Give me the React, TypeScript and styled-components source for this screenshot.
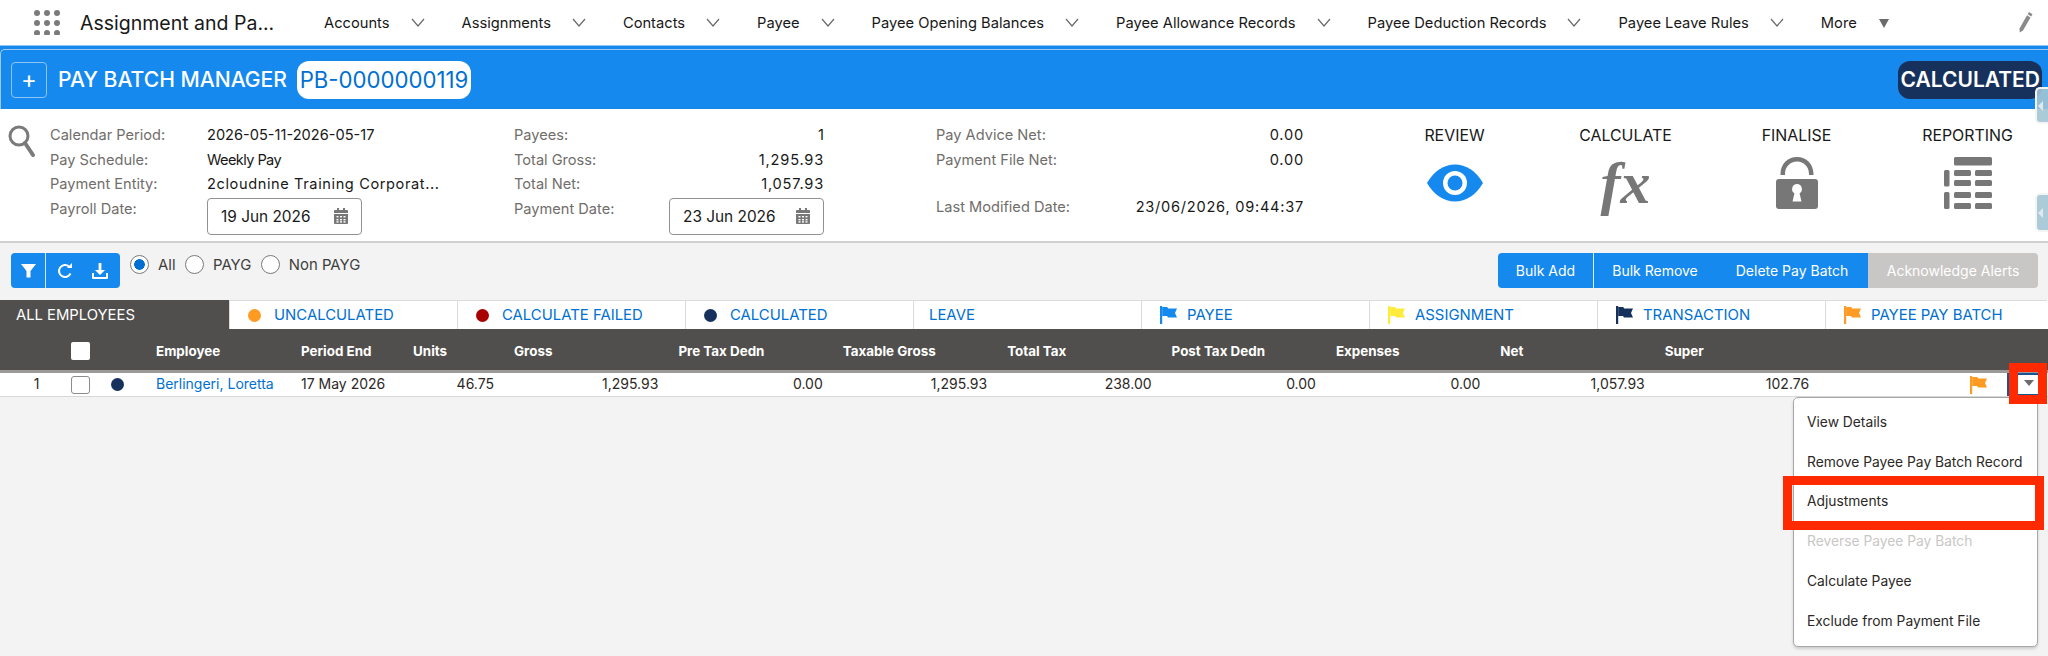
import React from "react";
import styled, { createGlobalStyle } from "styled-components";

const Global = createGlobalStyle`
  html, body { margin: 0; padding: 0; background: #f3f3f3; overflow: hidden; }
  body { font-family: Inter, "Liberation Sans", sans-serif; width: 2048px; height: 656px; position: relative; -webkit-font-smoothing: antialiased; }
  * { box-sizing: border-box; }
`;

const Page = styled.div`
  width: 2048px;
  height: 656px;
  position: relative;
  overflow: hidden;
  background: #f3f3f3;
`;

const TopBar = styled.header`
  height: 45px;
  background: #fff;
  display: flex;
  align-items: center;
  padding-left: 34px;
`;
const AppTitle = styled.div`
  margin-left: 20px;
  width: 244px;
  font-size: 19.5px;
  color: #181818;
`;
const NavList = styled.nav`
  display: flex;
  align-items: center;
  flex: 1;
  color: #181818;
  font-size: 14.7px;
`;
const NavItem = styled.div`
  display: flex;
  align-items: center;
  gap: 21px;
  margin-right: 37px;
  white-space: nowrap;
`;
const MoreCaret = styled.svg`
  width: 12px;
  height: 12px;
`;
const PencilWrap = styled.div`
  margin-left: auto;
  margin-right: 15px;
  display: flex;
`;

const BatchHeader = styled.div`
  height: 64px;
  padding-top: 3px;
  border-top: 1px solid #8fc5f5;
  background: #1589ee;
`;
const BatchInner = styled.div`
  height: 60px;
  border-top: 1px solid #9ccaf3;
  border-left: 1px solid #9ccaf3;
  border-top-left-radius: 5px;
  display: flex;
  align-items: center;
  padding: 0 6px 0 10px;
  color: #fff;
`;
const PlusButton = styled.div`
  width: 36px;
  height: 36px;
  border: 1px solid #8fc5f5;
  border-radius: 4px;
  display: flex;
  align-items: center;
  justify-content: center;
  font-size: 24px;
  line-height: 1;
`;
const BatchTitle = styled.div`
  margin-left: 11px;
  font-size: 21.1px;
  font-weight: 500;
  white-space: nowrap;
`;
const BatchId = styled.div`
  margin-left: 10px;
  width: 174px;
  height: 38px;
  border-radius: 12px;
  background: #fff;
  color: #0070d2;
  font-size: 22.2px;
  font-weight: 400;
  display: flex;
  align-items: center;
  justify-content: center;
  white-space: nowrap;
`;
const StatusPill = styled.div`
  margin-left: auto;
  width: 144px;
  height: 38px;
  border-radius: 12px;
  background: #16325c;
  font-size: 21px;
  font-weight: 600;
  display: flex;
  align-items: center;
  justify-content: flex-end;
  padding-right: 2px;
  white-space: nowrap;
`;

const Summary = styled.section`
  height: 134px;
  background: #fff;
  border-bottom: 2px solid #d0d0d0;
  display: flex;
  position: relative;
  padding-top: 1px;
`;
const SearchBox = styled.div`
  width: 50px;
  padding: 14px 0 0 7px;
`;
const SummaryCol = styled.div<{ $w: number; $label: number; $gap?: number }>`
  width: ${(p) => p.$w}px;
  margin-left: ${(p) => p.$gap ?? 0}px;
  padding-top: 16px;
  display: grid;
  grid-template-columns: ${(p) => p.$label}px 1fr;
  grid-auto-rows: 24.6px;
  align-content: start;
  font-size: 14.6px;
`;
const Label = styled.div<{ $nudge?: number }>`
  color: #706e6b;
  white-space: nowrap;
  margin-top: ${(p) => p.$nudge ?? 0}px;
`;
const Value = styled.div<{ $right?: boolean; $ls?: number; $nudge?: number }>`
  color: #181818;
  white-space: nowrap;
  text-align: ${(p) => (p.$right ? "right" : "left")};
  letter-spacing: ${(p) => p.$ls ?? 0}px;
  margin-top: ${(p) => p.$nudge ?? 0}px;
`;
const DateField = styled.div<{ $end?: boolean }>`
  margin-top: -2px;
  width: 155px;
  height: 37px;
  border: 1px solid #919191;
  border-radius: 4px;
  background: #fff;
  display: flex;
  align-items: center;
  justify-content: space-between;
  padding: 0 13px;
  color: #181818;
  font-size: 15.4px;
  justify-self: ${(p) => (p.$end ? "end" : "start")};
`;
const Actions = styled.div`
  position: absolute;
  top: 1px;
  left: 1369px;
  display: grid;
  grid-template-columns: repeat(4, 171px);
  padding-top: 17px;
`;
const ActionCell = styled.div`
  display: flex;
  flex-direction: column;
  align-items: center;
  gap: 12px;
  font-size: 15.9px;
  line-height: 17px;
  color: #181818;
`;
const ActionIcon = styled.div`
  height: 54px;
  display: flex;
  align-items: center;
  justify-content: center;
`;
const FxGlyph = styled.span`
  font-family: "Liberation Serif", serif;
  font-style: italic;
  font-weight: 700;
  font-size: 60px;
  line-height: 54px;
  color: #777;
`;
const EdgeTab = styled.div<{ $top: number; $h: number }>`
  position: absolute;
  right: 0;
  top: ${(p) => p.$top}px;
  width: 13px;
  height: ${(p) => p.$h}px;
  border-radius: 5px 0 0 5px;
  background: rgba(163, 196, 212, 0.9);
  border: 2px solid #f4f4f4;
  border-right: none;
  display: flex;
  align-items: center;
  &::before {
    content: "";
    border-style: solid;
    border-width: 5px 5px 5px 0;
    border-color: transparent #dfeaf0 transparent transparent;
    margin-left: 1px;
  }
`;

const Toolbar = styled.div`
  height: 57px;
  padding: 10px 10px 0 11px;
  display: flex;
  align-items: flex-start;
`;
const IconGroup = styled.div`
  width: 109px;
  height: 35px;
  border-radius: 4px;
  background: #1589ee;
  display: flex;
  align-items: center;
`;
const FilterCell = styled.div`
  width: 35px;
  height: 35px;
  border-right: 1px solid #cfe6fb;
  display: flex;
  align-items: center;
  justify-content: center;
`;
const GroupIcons = styled.div`
  flex: 1;
  display: flex;
  justify-content: space-around;
  padding: 0 3px;
`;
const RadioRow = styled.div`
  margin-left: 10px;
  margin-top: 2px;
  display: flex;
  align-items: center;
  height: 19px;
  font-size: 14.9px;
  color: #3e3e3c;
`;
const Radio = styled.span<{ $on?: boolean }>`
  width: 19px;
  height: 19px;
  border-radius: 50%;
  border: 1px solid #7a7a7a;
  background: ${(p) => (p.$on ? "radial-gradient(circle, #0070d2 0 5px, #fff 5.6px)" : "#fff")};
  margin-right: 9px;
`;
const RadioText = styled.span`
  margin-right: 9.5px;
`;
const BulkGroup = styled.div`
  margin-left: auto;
  height: 35px;
  display: flex;
  border-radius: 4px;
  overflow: hidden;
  font-size: 14px;
  color: #fff;
`;
const BulkButton = styled.div<{ $w: number; $off?: boolean; $line?: boolean }>`
  width: ${(p) => p.$w}px;
  background: ${(p) => (p.$off ? "#c9c7c5" : "#1589ee")};
  border-right: ${(p) => (p.$line ? "1px solid #d8edff" : "none")};
  display: flex;
  align-items: center;
  justify-content: center;
  white-space: nowrap;
`;

const Tabs = styled.div`
  height: 29px;
  display: flex;
  background: #fff;
`;
const TabAll = styled.div`
  width: 229px;
  background: #514f4d;
  color: #fff;
  display: flex;
  align-items: center;
  padding-left: 16px;
  font-size: 14.8px;
`;
const Tab = styled.div<{ $w?: number; $pad?: number; $gap?: number }>`
  width: ${(p) => p.$w ?? 228}px;
  border-left: 1px solid #dddbda;
  border-top: 1px solid #dddbda;
  display: flex;
  align-items: center;
  padding-left: ${(p) => p.$pad ?? 18}px;
  gap: ${(p) => p.$gap ?? 13}px;
  color: #0070d2;
  font-size: 14.9px;
  white-space: nowrap;
`;
const Dot = styled.span<{ $c: string }>`
  width: 13px;
  height: 13px;
  border-radius: 50%;
  background: ${(p) => p.$c};
  flex: none;
`;

const COLS = "60px 44px 52px 145px 112px 81px repeat(8, 164.4px) 1fr";
const HeadRow = styled.div`
  height: 44px;
  padding-top: 2px;
  background: #514f4d;
  border-bottom: 3px solid #9b9a98;
  display: grid;
  grid-template-columns: ${COLS};
  align-items: center;
  color: #fff;
  font-size: 13.4px;
  font-weight: 700;
`;
const HeadCell = styled.div<{ $pad?: boolean }>`
  padding-left: ${(p) => (p.$pad ? 20 : 0)}px;
  white-space: nowrap;
`;
const HeadCheck = styled.span`
  display: block;
  margin-left: 11px;
  width: 19px;
  height: 18px;
  background: #fff;
  border-radius: 2px;
`;
const DataRow = styled.div`
  height: 24px;
  background: #fff;
  border-bottom: 1px solid #d8d8d8;
  display: grid;
  grid-template-columns: ${COLS};
  align-items: center;
  color: #2b2826;
  font-size: 14px;
`;
const NumCell = styled.div`
  text-align: center;
  padding-left: 13px;
  margin-top: -2px;
`;
const RowCheck = styled.span`
  display: block;
  margin-left: 11px;
  width: 19px;
  height: 18px;
  background: #fff;
  border: 1px solid #8c8c8c;
  border-radius: 3px;
`;
const StatusDotCell = styled.div`
  display: flex;
  padding-left: 7px;
`;
const NameLink = styled.div`
  color: #0070d2;
  white-space: nowrap;
  margin-top: -2px;
`;
const Cell = styled.div<{ $right?: boolean }>`
  text-align: ${(p) => (p.$right ? "right" : "left")};
  white-space: nowrap;
  margin-top: -2px;
`;
const RowEnd = styled.div`
  display: flex;
  align-items: center;
  height: 23px;
  padding-left: 161px;
`;
const ActionToggle = styled.div`
  margin-left: 20px;
  width: 33px;
  height: 23px;
  border: 2px solid #1b5297;
  background: #fff;
`;

const Highlight = styled.div<{ $l: number; $t: number; $w: number; $h: number }>`
  position: absolute;
  left: ${(p) => p.$l}px;
  top: ${(p) => p.$t}px;
  width: ${(p) => p.$w}px;
  height: ${(p) => p.$h}px;
  border: 9px solid #ff2a00;
  z-index: 5;
`;
const ToggleCaret = styled.svg`
  position: absolute;
  left: 2024px;
  top: 380px;
  width: 10px;
  height: 6px;
  z-index: 6;
`;
const Menu = styled.div`
  position: absolute;
  left: 1793px;
  top: 397px;
  width: 245px;
  height: 250px;
  background: #fff;
  border: 1px solid #a8a8a8;
  border-radius: 5px;
  box-shadow: 0 2px 3px rgba(0, 0, 0, 0.16);
  padding: 4px 0 0 13px;
  z-index: 4;
  display: flex;
  flex-direction: column;
`;
const MenuItem = styled.div<{ $off?: boolean }>`
  height: 39.8px;
  display: flex;
  align-items: center;
  font-size: 13.8px;
  white-space: nowrap;
  color: ${(p) => (p.$off ? "#c9c7c5" : "#2b2826")};
`;

const Grid = () => (
  <svg width="26" height="25" viewBox="0 0 26 25" fill="#7b7b7b">
    {[3, 13, 23].flatMap((y) => [3, 13, 23].map((x) => <circle key={`${x}-${y}`} cx={x} cy={y} r="3" />))}
  </svg>
);
const Chevron = () => (
  <svg width="14" height="9" viewBox="0 0 14 9" fill="none" stroke="#6b6b6b" strokeWidth="1.2">
    <path d="M1 1l6 7 6-7" />
  </svg>
);
const Pencil = () => (
  <svg width="15" height="23" viewBox="0 0 15 23" fill="#8a8a8a">
    <path d="M11 1l3.500 2.200-1.300 2.200-3.500-2.200zM9 4.200l3.500 2.200L5 19.600 1.700 21.600 1.500 17.400z" />
  </svg>
);
const SearchIcon = () => (
  <svg width="30" height="34" viewBox="0 0 30 34" fill="none" stroke="#7a7a7a">
    <circle cx="12" cy="12" r="9" strokeWidth="3" />
    <path d="M18 19l8 12" strokeWidth="4" strokeLinecap="round" />
  </svg>
);
const CalendarIcon = () => (
  <svg width="14" height="16" viewBox="0 0 14 16" fill="#777">
    <rect x="3" y="0" width="2" height="3" />
    <rect x="9" y="0" width="2" height="3" />
    <path d="M1 2h12a1 1 0 0 1 1 1v2H0V3a1 1 0 0 1 1-1z" />
    <path d="M0 6h14v9a1 1 0 0 1-1 1H1a1 1 0 0 1-1-1z" />
    <g fill="#fff">
      {[8, 11, 13.2].flatMap((y) => [2.5, 6, 9.5].map((x) => <rect key={`${x}-${y}`} x={x} y={y} width="2" height="1.4" />))}
    </g>
  </svg>
);
const EyeIcon = () => (
  <svg width="56" height="38" viewBox="0 0 56 38">
    <path d="M0 19C7 7 17 0.500 28 0.500S49 7 56 19C49 31 39 37.500 28 37.500S7 31 0 19z" fill="#1589ee" />
    <circle cx="28" cy="19" r="12" fill="#fff" />
    <circle cx="28" cy="19" r="7.500" fill="#1589ee" />
  </svg>
);
const LockIcon = () => (
  <svg width="42" height="52" viewBox="0 0 42 52" fill="#777">
    <path d="M4.500 18V17C4.500 7 11.500 0 21 0s16.500 7 16.500 17v1h-4.500v-1C33 10 28 4.500 21 4.500S9 10 9 17v1z" />
    <rect x="0" y="22" width="42" height="30" rx="3" />
    <path d="M21 27a5 5 0 0 1 2.600 9.200l1.800 8.300h-8.800l1.800-8.300A5 5 0 0 1 21 27z" fill="#fff" />
  </svg>
);
const ReportIcon = () => (
  <svg width="48" height="52" viewBox="0 0 48 52" fill="#777">
    <rect x="10" y="0" width="38" height="8.500" rx="1.500" />
    <rect x="0" y="13" width="5.500" height="16.500" rx="1.500" />
    <rect x="0" y="35" width="5.500" height="17" rx="1.500" />
    {[13, 23, 35, 46].flatMap((y) => [10, 31].map((x) => <rect key={`${x}-${y}`} x={x} y={y} width={17} height="6" rx="1.500" />))}
  </svg>
);
const FunnelIcon = () => (
  <svg width="17" height="17" viewBox="0 0 17 17" fill="#fff">
    <path d="M1 2h15l-5.500 7v6.500h-4V9z" />
  </svg>
);
const RedoIcon = () => (
  <svg width="17" height="17" viewBox="0 0 17 17" fill="none" stroke="#fff" strokeWidth="2">
    <path d="M13.500 11.500A6 6 0 1 1 12 4.500" />
    <path d="M10 6h5V1z" fill="#fff" stroke="none" />
  </svg>
);
const DownloadIcon = () => (
  <svg width="18" height="18" viewBox="0 0 18 18" fill="#fff">
    <path d="M7.600 1h2.800v7H14l-5 5-5-5h3.600z" />
    <path d="M1 11h2v4h12v-4h2v5a1 1 0 0 1-1 1H2a1 1 0 0 1-1-1z" />
  </svg>
);
const Flag = ({ c }: { c: string }) => (
  <svg width="17" height="18" viewBox="0 0 17 18">
    <rect x="0" y="0" width="2.200" height="18" fill={c} />
    <path d="M2.200 1h5l1 1.500H17l-2 4.500 2 4.500H8l-1-1.500H2.200z" fill={c} />
  </svg>
);

const rowValues = ["1,295.93", "0.00", "1,295.93", "238.00", "0.00", "0.00", "1,057.93", "102.76"];

export default function App() {
  return (
    <Page>
      <Global />
      <TopBar>
        <Grid />
        <AppTitle>Assignment and Pa...</AppTitle>
        <NavList>
          {["Accounts", "Assignments", "Contacts", "Payee", "Payee Opening Balances", "Payee Allowance Records", "Payee Deduction Records", "Payee Leave Rules"].map((n) => (
            <NavItem key={n}>
              {n}
              <Chevron />
            </NavItem>
          ))}
          <NavItem>
            More
            <MoreCaret viewBox="0 0 12 12" fill="#6b6b6b">
              <path d="M1 2h10L6 11z" />
            </MoreCaret>
          </NavItem>
          <PencilWrap>
            <Pencil />
          </PencilWrap>
        </NavList>
      </TopBar>

      <BatchHeader>
        <BatchInner>
          <PlusButton>+</PlusButton>
          <BatchTitle>PAY BATCH MANAGER</BatchTitle>
          <BatchId>PB-0000000119</BatchId>
          <StatusPill>CALCULATED</StatusPill>
        </BatchInner>
      </BatchHeader>

      <Summary>
        <SearchBox>
          <SearchIcon />
        </SearchBox>
        <SummaryCol $w={464} $label={157}>
          <Label>Calendar Period:</Label>
          <Value>2026-05-11-2026-05-17</Value>
          <Label>Pay Schedule:</Label>
          <Value $ls={-0.6}>Weekly Pay</Value>
          <Label>Payment Entity:</Label>
          <Value $ls={0.6}>2cloudnine Training Corporat...</Value>
          <Label>Payroll Date:</Label>
          <DateField>
            19 Jun 2026
            <CalendarIcon />
          </DateField>
        </SummaryCol>
        <SummaryCol $w={309} $label={155}>
          <Label>Payees:</Label>
          <Value $right>1</Value>
          <Label>Total Gross:</Label>
          <Value $right $ls={0.8}>1,295.93</Value>
          <Label>Total Net:</Label>
          <Value $right $ls={0.8}>1,057.93</Value>
          <Label>Payment Date:</Label>
          <DateField $end>
            23 Jun 2026
            <CalendarIcon />
          </DateField>
        </SummaryCol>
        <SummaryCol $w={368} $label={180} $gap={113}>
          <Label>Pay Advice Net:</Label>
          <Value $right $ls={0.8}>0.00</Value>
          <Label>Payment File Net:</Label>
          <Value $right $ls={0.8}>0.00</Value>
          <Label />
          <Value />
          <Label $nudge={-2}>Last Modified Date:</Label>
          <Value $right $ls={0.75} $nudge={-2}>23/06/2026, 09:44:37</Value>
        </SummaryCol>
        <Actions>
          <ActionCell>
            REVIEW
            <ActionIcon>
              <EyeIcon />
            </ActionIcon>
          </ActionCell>
          <ActionCell>
            CALCULATE
            <ActionIcon>
              <FxGlyph>fx</FxGlyph>
            </ActionIcon>
          </ActionCell>
          <ActionCell>
            FINALISE
            <ActionIcon>
              <LockIcon />
            </ActionIcon>
          </ActionCell>
          <ActionCell>
            REPORTING
            <ActionIcon>
              <ReportIcon />
            </ActionIcon>
          </ActionCell>
        </Actions>
        <EdgeTab $top={-22} $h={37} />
        <EdgeTab $top={84} $h={39} />
      </Summary>

      <Toolbar>
        <IconGroup>
          <FilterCell>
            <FunnelIcon />
          </FilterCell>
          <GroupIcons>
            <RedoIcon />
            <DownloadIcon />
          </GroupIcons>
        </IconGroup>
        <RadioRow>
          <Radio $on />
          <RadioText>All</RadioText>
          <Radio />
          <RadioText>PAYG</RadioText>
          <Radio />
          <RadioText>Non PAYG</RadioText>
        </RadioRow>
        <BulkGroup>
          <BulkButton $w={96} $line>Bulk Add</BulkButton>
          <BulkButton $w={122}>Bulk Remove</BulkButton>
          <BulkButton $w={152}>Delete Pay Batch</BulkButton>
          <BulkButton $w={170} $off>Acknowledge Alerts</BulkButton>
        </BulkGroup>
      </Toolbar>

      <Tabs>
        <TabAll>ALL EMPLOYEES</TabAll>
        <Tab><Dot $c="#ff9a23" />UNCALCULATED</Tab>
        <Tab><Dot $c="#a80000" />CALCULATE FAILED</Tab>
        <Tab><Dot $c="#16325c" />CALCULATED</Tab>
        <Tab $pad={15}>LEAVE</Tab>
        <Tab $gap={10}><Flag c="#1589ee" />PAYEE</Tab>
        <Tab $gap={10}><Flag c="#ffeb3b" />ASSIGNMENT</Tab>
        <Tab $gap={10}><Flag c="#16325c" />TRANSACTION</Tab>
        <Tab $w={222} $gap={10}><Flag c="#ff9a23" />PAYEE PAY BATCH</Tab>
      </Tabs>

      <HeadRow>
        <span />
        <HeadCheck />
        <span />
        <HeadCell>Employee</HeadCell>
        <HeadCell>Period End</HeadCell>
        <HeadCell>Units</HeadCell>
        {["Gross", "Pre Tax Dedn", "Taxable Gross", "Total Tax", "Post Tax Dedn", "Expenses", "Net", "Super"].map((h) => (
          <HeadCell $pad key={h}>{h}</HeadCell>
        ))}
      </HeadRow>
      <DataRow>
        <NumCell>1</NumCell>
        <RowCheck />
        <StatusDotCell>
          <Dot $c="#16325c" />
        </StatusDotCell>
        <NameLink>Berlingeri, Loretta</NameLink>
        <Cell>17 May 2026</Cell>
        <Cell $right>46.75</Cell>
        {rowValues.map((v, i) => (
          <Cell $right key={i}>{v}</Cell>
        ))}
        <RowEnd>
          <Flag c="#ff9a23" />
          <ActionToggle />
        </RowEnd>
      </DataRow>

      <Menu>
        <MenuItem>View Details</MenuItem>
        <MenuItem>Remove Payee Pay Batch Record</MenuItem>
        <MenuItem>Adjustments</MenuItem>
        <MenuItem $off>Reverse Payee Pay Batch</MenuItem>
        <MenuItem>Calculate Payee</MenuItem>
        <MenuItem>Exclude from Payment File</MenuItem>
      </Menu>
      <Highlight $l={2009} $t={363} $w={38} $h={41} />
      <ToggleCaret viewBox="0 0 10 6" fill="#6b6b6b">
        <path d="M0 0h10L5 6z" />
      </ToggleCaret>
      <Highlight $l={1783} $t={476} $w={261} $h={54} />
    </Page>
  );
}
